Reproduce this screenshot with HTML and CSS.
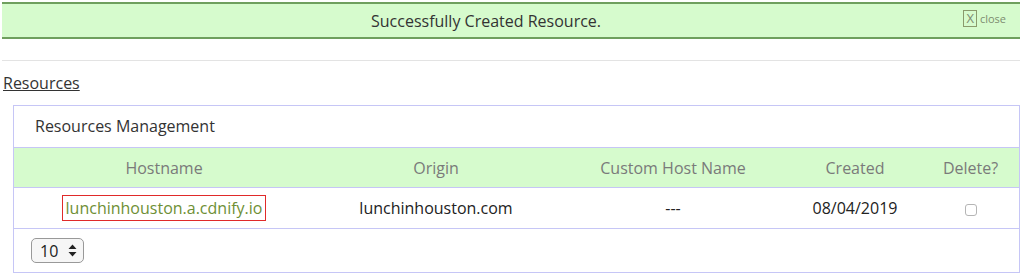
FILE: index.html
```html
<!DOCTYPE html>
<html lang="en">
<head>
  <meta charset="UTF-8">
  <title>Resources</title>
  <link rel="stylesheet" href="styles.css">
</head>
<body>

<div class="flash">
  <span class="flash-text">Successfully Created Resource.</span>
  <a class="flash-close" href="#"><span class="x-box">X</span> close</a>
</div>

<hr class="divider">

<h3 class="page-title">Resources</h3>

<div class="panel">
  <div class="panel-heading">Resources Management</div>
  <table class="grid">
    <thead>
      <tr>
        <th class="col-host">Hostname</th>
        <th class="col-origin">Origin</th>
        <th class="col-custom">Custom Host Name</th>
        <th class="col-created">Created</th>
        <th class="col-delete">Delete?</th>
      </tr>
    </thead>
    <tbody>
      <tr>
        <td><a class="host-link" href="#">lunchinhouston.a.cdnify.io</a></td>
        <td>lunchinhouston.com</td>
        <td>---</td>
        <td>08/04/2019</td>
        <td><input type="checkbox" class="del-box"></td>
      </tr>
    </tbody>
  </table>
  <div class="panel-footer">
    <div class="page-size">
      <span>10</span>
      <svg width="9" height="13" viewBox="0 0 9 13"><path d="M4.5 0.5 L8.5 5 H0.5 Z M4.5 12.5 L8.5 8 H0.5 Z" fill="#222"/></svg>
    </div>
  </div>
</div>

</body>
</html>
```

FILE: styles.css
```css
body {
  margin: 0;
  padding: 2px 4px 0 2px;
  font-family: "Open Sans", Arial, sans-serif;
  color: #222;
  background: #fff;
}
.flash {
  position: relative;
  height: 33px;
  padding-right: 50px;
  background-color: #d6fbcd;
  border-top: 2px solid #6f9f5e;
  border-bottom: 2px solid #6f9f5e;
  display: flex;
  align-items: center;
  justify-content: center;
}
.flash-text {
  font-size: 16px;
  color: #333;
}
.flash-close {
  position: absolute;
  right: 14px;
  top: 6px;
  font-size: 11px;
  color: #7d8c70;
  text-decoration: none;
  display: flex;
  align-items: center;
  gap: 3px;
}
.x-box {
  border: 1px solid #8a9a6c;
  padding: 0 2px;
  font-size: 13px;
  line-height: 15px;
}
.divider {
  border: 0;
  border-top: 1px solid #e3e3e3;
  margin: 21px 0 0 0;
}
.page-title {
  margin: 12px 0 0 1px;
  font-size: 16px;
  font-weight: normal;
  text-decoration: underline;
  color: #333;
  line-height: 20px;
}
.panel {
  margin: 12px 0 0 11px;
  border: 1px solid #c6c6f6;
}
.panel-heading {
  height: 41px;
  line-height: 41px;
  padding-left: 21px;
  font-size: 16px;
  color: #333;
  border-bottom: 1px solid #c6c6f6;
}
.grid {
  width: 100%;
  border-collapse: collapse;
  table-layout: fixed;
}
.grid th {
  background-color: #d6fbcd;
  color: #7a7a7a;
  font-weight: normal;
  font-size: 16px;
  padding: 0;
  height: 39px;
  border-bottom: 1px solid #c6c6f6;
}
.grid td {
  text-align: center;
  font-size: 16px;
  padding: 0;
  height: 40px;
  border-bottom: 1px solid #c6c6f6;
}
.col-host { width: 300px; }
.col-origin { width: 244px; }
.col-custom { width: 230px; }
.col-created { width: 134px; }
.host-link {
  color: #6e8f35;
  text-decoration: none;
  border: 1px solid #e02a2a;
  padding: 1px 3px;
}
.del-box {
  appearance: none;
  width: 12px;
  height: 12px;
  margin: 0;
  border: 1px solid #b5b5b5;
  border-radius: 3px;
  background: #fff;
  vertical-align: middle;
}
.panel-footer {
  height: 43px;
  display: flex;
  align-items: center;
  padding-left: 17px;
}
.page-size {
  width: 53px;
  height: 25px;
  box-sizing: border-box;
  border: 1px solid #999;
  border-radius: 5px;
  background: #f6f6f6;
  display: flex;
  align-items: center;
  justify-content: space-between;
  padding: 0 6px 0 8px;
  font-size: 16px;
}
```
